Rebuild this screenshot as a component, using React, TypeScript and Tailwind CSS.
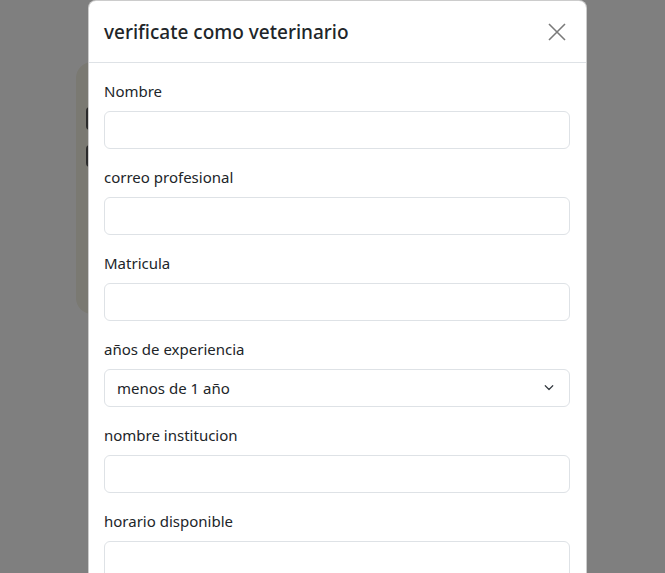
const font = { fontFamily: '"Segoe UI", "Noto Sans", "Open Sans", sans-serif' };

function Field({ label }: { label: string }) {
  return (
    <div className="mb-4">
      <label className="mb-2 block text-[15px] leading-6 text-[#212529]">{label}</label>
      <input
        type="text"
        className="block h-[38px] w-full rounded-md border border-[#dee2e6] bg-white px-3 text-[15px] text-[#212529] outline-none"
      />
    </div>
  );
}

function SelectField({ label, value }: { label: string; value: string }) {
  return (
    <div className="mb-4">
      <label className="mb-2 block text-[15px] leading-6 text-[#212529]">{label}</label>
      <div className="relative">
        <select className="block h-[38px] w-full appearance-none rounded-md border border-[#dee2e6] bg-white pl-3 pr-9 text-[15px] text-[#212529] outline-none">
          <option>{value}</option>
          <option>1 a 3 años</option>
          <option>mas de 3 años</option>
        </select>
        <svg
          className="pointer-events-none absolute right-[13px] top-[13px]"
          width="16"
          height="12"
          viewBox="0 0 16 16"
          fill="none"
          stroke="#343a40"
          strokeWidth="1.6"
          strokeLinecap="round"
          strokeLinejoin="round"
        >
          <path d="m3 5 5 5 5-5" />
        </svg>
      </div>
    </div>
  );
}

export default function App() {
  return (
    <div className="relative h-[573px] w-[665px] overflow-hidden bg-white" style={font}>
      {/* page behind the modal */}
      <div className="pl-[76px] pt-[62px]">
        <div className="flex h-[252px] w-[420px] flex-col gap-[15px] rounded-2xl bg-[#f4f2e4] pl-[10px] pt-[45px]">
          <div className="h-[23px] w-[200px] rounded bg-[#555]"></div>
          <div className="h-[22px] w-[200px] rounded bg-[#555]"></div>
        </div>
      </div>

      {/* backdrop + modal */}
      <div className="absolute inset-0 bg-black/50">
        <div className="ml-[88px] w-[499px] rounded-lg border border-black/20 bg-white">
          <div className="flex h-[62px] items-center justify-between border-b border-[#dee2e6] pl-[15px] pr-4">
            <h5 className="text-[19px] font-medium leading-[30px] text-[#212529]">verificate como veterinario</h5>
            <button className="mr-[1px] flex h-6 w-6 items-center justify-center text-[#7a7a7a]">
              <svg width="18" height="18" viewBox="0 0 18 18" fill="none" stroke="currentColor" strokeWidth="1.6">
                <path d="M1 1 17 17M17 1 1 17" />
              </svg>
            </button>
          </div>
          <div className="py-4 pl-[15px] pr-4">
            <Field label="Nombre" />
            <Field label="correo profesional" />
            <Field label="Matricula" />
            <SelectField label="años de experiencia" value="menos de 1 año" />
            <Field label="nombre institucion" />
            <Field label="horario disponible" />
          </div>
        </div>
      </div>
    </div>
  );
}
